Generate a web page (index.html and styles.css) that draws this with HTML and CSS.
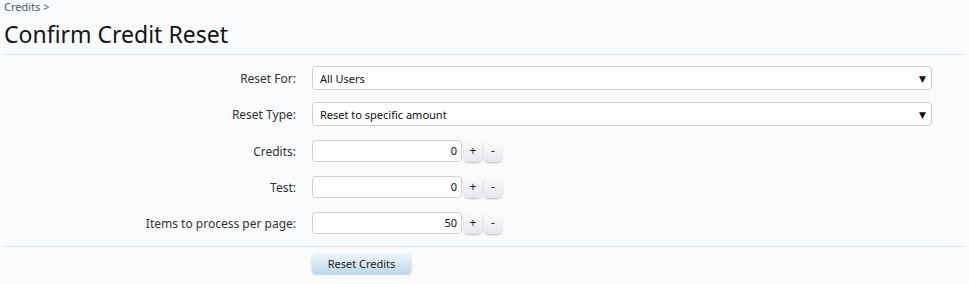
FILE: index.html
```html
<!DOCTYPE html>
<html>
<head>
<meta charset="utf-8">
<link rel="stylesheet" href="styles.css">
</head>
<body>
<div class="page">
  <div class="breadcrumb"><a href="#">Credits</a> &gt;</div>
  <h1 class="title">Confirm Credit Reset</h1>
  <form class="form">
    <div class="row row-sel">
      <label class="label">Reset For:</label>
      <div class="control">
        <div class="select"><span>All Users</span><span class="arrow">&#9660;</span></div>
      </div>
    </div>
    <div class="row row-sel">
      <label class="label">Reset Type:</label>
      <div class="control">
        <div class="select"><span>Reset to specific amount</span><span class="arrow">&#9660;</span></div>
      </div>
    </div>
    <div class="row row-num">
      <label class="label">Credits:</label>
      <div class="control spin">
        <div class="num">0</div>
        <span class="btn-s">+</span><span class="btn-s">-</span>
      </div>
    </div>
    <div class="row row-num">
      <label class="label">Test:</label>
      <div class="control spin">
        <div class="num">0</div>
        <span class="btn-s">+</span><span class="btn-s">-</span>
      </div>
    </div>
    <div class="row row-num last">
      <label class="label">Items to process per page:</label>
      <div class="control spin">
        <div class="num">50</div>
        <span class="btn-s">+</span><span class="btn-s">-</span>
      </div>
    </div>
    <div class="submit">
      <span class="submit-btn">Reset Credits</span>
    </div>
  </form>
</div>
</body>
</html>
```
FILE: styles.css
```css
html, body {
  margin: 0;
  padding: 0;
  background: #fafbfd;
}
body {
  font-family: "Noto Sans", "DejaVu Sans", sans-serif;
  color: #222;
}
.page {
  padding: 0 5px 0 4px;
}
.breadcrumb {
  font-size: 11px;
  line-height: 14px;
  color: #4b5a6a;
}
.breadcrumb a {
  color: #4b5a6a;
  text-decoration: none;
}
.title {
  margin: 0;
  font-weight: normal;
  font-size: 23px;
  line-height: 30px;
  padding-top: 5px;
  padding-bottom: 5px;
  color: #141414;
  border-bottom: 1px solid #d8e6ec;
}
.form {
  display: flex;
  flex-direction: column;
  padding-top: 11px;
}
.row {
  display: flex;
  align-items: center;
}
.row-sel {
  height: 24px;
  margin-bottom: 12px;
}
.row-num {
  height: 22px;
  margin-bottom: 14px;
}
.row-sel + .row-num {
  margin-top: 2px;
}
.row-num.last {
  margin-bottom: 12px;
}
.label {
  width: 292px;
  text-align: right;
  padding-right: 16px;
  font-size: 12px;
  color: #333;
}
.control {
  flex: 1;
  padding-right: 32px;
}
.select {
  box-sizing: border-box;
  height: 24px;
  border: 1px solid #cfcfcf;
  border-radius: 4px;
  background: #fff;
  display: flex;
  align-items: center;
  justify-content: space-between;
  padding: 0 5px 0 7px;
  font-size: 11px;
  color: #111;
}
.arrow {
  font-size: 9px;
  color: #111;
}
.spin {
  display: flex;
  align-items: center;
  gap: 2px;
}
.num {
  box-sizing: border-box;
  width: 150px;
  height: 22px;
  border: 1px solid #cfcfcf;
  border-radius: 4px;
  background: #fff;
  text-align: right;
  padding-right: 4px;
  font-size: 11px;
  line-height: 20px;
  color: #111;
}
.btn-s {
  width: 18px;
  height: 21px;
  border-radius: 5px;
  background: linear-gradient(#fbfbfc, #e6e8ec);
  box-shadow: 0 1px 2px rgba(0,0,0,0.25);
  font-size: 12px;
  line-height: 20px;
  text-align: center;
  color: #222;
}
.submit {
  display: flex;
  border-top: 1px solid #d8e6ec;
  padding: 6px 0 0 308px;
}
.submit-btn {
  display: block;
  width: 99px;
  height: 22px;
  line-height: 21px;
  border-radius: 6px;
  background: linear-gradient(#eef5fa, #bcd8ea);
  box-shadow: 0 1px 2px rgba(0,0,0,0.3);
  font-size: 11px;
  text-align: center;
  color: #222;
}
```
